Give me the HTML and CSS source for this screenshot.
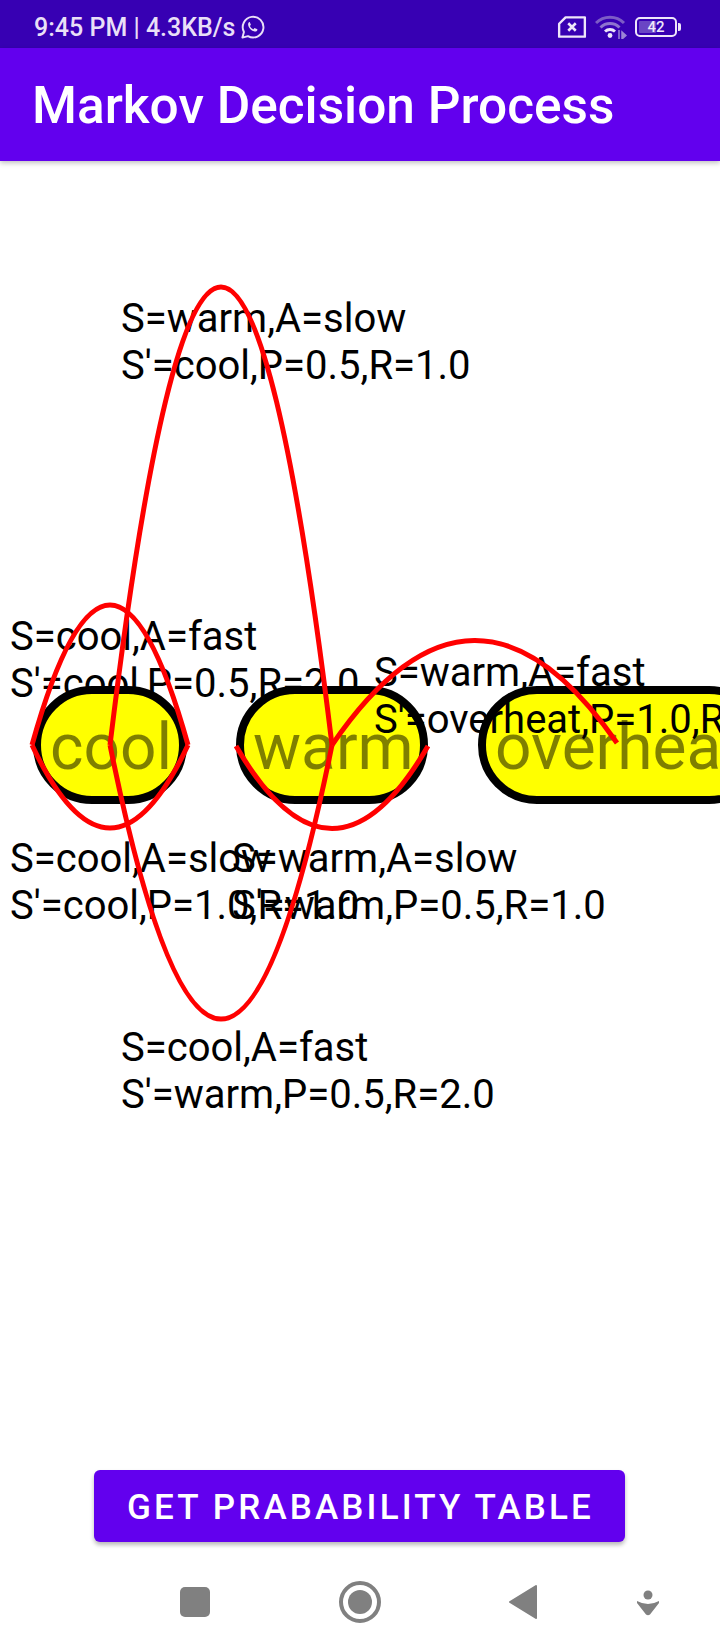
FILE: index.html
```html
<!DOCTYPE html>
<html lang="en">
<head>
  <meta charset="UTF-8" />
  <meta name="viewport" content="width=device-width, initial-scale=1.0"/>
  <title>Markov Decision Process</title>
  <link rel="stylesheet" href="styles.css">
</head>
<body>
  <div class="phone">
    <div class="status-bar">
      <div class="status-left">
        <span>9:45 PM | 4.3KB/s</span>
        <svg class="whatsapp" viewBox="0 0 24 24" width="27" height="27">
          <path d="M3 21l1.4-5A9.2 9.2 0 1 1 8 19.7z" fill="none" stroke="#e9dff7" stroke-width="1.7" stroke-linejoin="round"/>
          <path d="M8.8 7.4c-.9.8-1 2.2-.2 3.9 1 2 2.700 3.500 4.700 4.100 1.400.4 2.600 0 3-1 .2-.5 0-.8-.4-1l-1.700-.8c-.4-.2-.6 0-.9.4-.4.5-.6.6-1.100.3-1-.5-1.800-1.300-2.300-2.300-.2-.4 0-.6.3-.9.3-.3.4-.5.2-.9l-.7-1.700c-.2-.5-.5-.5-.9-.1z" fill="#e9dff7"/>
        </svg>
      </div>
      <div class="status-right">
        <svg viewBox="0 0 28 22" width="30" height="24">
          <path d="M8 2h18v18H2V8z" fill="none" stroke="#eee6fa" stroke-width="2.2" stroke-linejoin="round"/>
          <path d="M10.500 7.500l7 7M17.500 7.500l-7 7" stroke="#eee6fa" stroke-width="2.400"/>
        </svg>
        <svg viewBox="0 0 32 24" width="32" height="24">
          <path d="M1 8a20 20 0 0 1 28 0" fill="none" stroke="#7d5cc6" stroke-width="3"/>
          <path d="M5.500 12.500a13.500 13.500 0 0 1 19 0" fill="none" stroke="#8f74cf" stroke-width="3"/>
          <path d="M10 16.500a7.500 7.500 0 0 1 10 0" fill="none" stroke="#eee6fa" stroke-width="3"/>
          <circle cx="15" cy="20.500" r="2.400" fill="#eee6fa"/>
          <path d="M24 15v9M27 17v7l4-3.500z" stroke="#9c84d6" stroke-width="1.500" fill="#9c84d6"/>
        </svg>
        <div class="battery">
          <div class="battery-body">
            <div class="battery-fill"></div>
            <span class="battery-num">42</span>
          </div>
          <div class="battery-cap"></div>
        </div>
      </div>
    </div>

    <div class="app-bar">Markov Decision Process</div>

    <div class="canvas">
      <div class="edge-label label-warm-cool">S=warm,A=slow<br>S'=cool,P=0.5,R=1.0</div>
      <div class="edge-label label-cool-top">S=cool,A=fast<br>S'=cool,P=0.5,R=2.0</div>
      <div class="edge-label label-cool-bottom">S=cool,A=slow<br>S'=cool,P=1.0,R=1.0</div>
      <div class="edge-label label-warm-bottom">S=warm,A=slow<br>S'=warm,P=0.5,R=1.0</div>
      <div class="edge-label label-cool-warm">S=cool,A=fast<br>S'=warm,P=0.5,R=2.0</div>

      <div class="node node-cool"><span>cool</span></div>
      <div class="node node-warm"><span>warm</span></div>
      <div class="node node-overheat"><span>overheat</span></div>

      <div class="edge-label label-overheat">S=warm,A=fast<br>S'=overheat,P=1.0,R=-10</div>

      <svg class="edges" viewBox="0 161 720 1289" width="720" height="1289">
        <path d="M32 745Q110 465 188 745"/>
        <path d="M32 745Q110 911 188 745"/>
        <path d="M236 746Q332 911 428 746"/>
        <path d="M110 745Q221 -171 332 745"/>
        <path d="M110 745Q221 1293 332 745"/>
        <path d="M332 745Q474 537 617 743"/>
      </svg>
    </div>

    <div class="footer">
      <button class="table-btn">GET PRABABILITY TABLE</button>
    </div>

    <div class="nav-bar">
      <div class="nav-square"></div>
      <div class="nav-circle"><div class="nav-dot"></div></div>
      <svg class="nav-back" viewBox="0 0 30 36" width="30" height="36">
        <path d="M28 2L2 18l26 16z" fill="#808080" stroke="#808080" stroke-width="2" stroke-linejoin="round"/>
      </svg>
      <svg class="nav-down" viewBox="0 0 24 26" width="24" height="26">
        <circle cx="12" cy="5" r="4.500" fill="#808080"/>
        <path d="M1 11q11 6 22 0v2l-9 11.500q-2 1.500-4 0L1 13z" fill="#808080"/>
      </svg>
    </div>
  </div>
</body>
</html>
```

FILE: styles.css
```css
* {
  box-sizing: border-box;
}

body {
  margin: 0;
  background: #fff;
  font-family: Roboto, sans-serif;
}

.phone {
  width: 720px;
  height: 1650px;
  display: flex;
  flex-direction: column;
  overflow: hidden;
}

/* status bar */
.status-bar {
  height: 48px;
  flex: none;
  background: #3700b3;
  color: #e9dff7;
  display: flex;
  align-items: center;
  justify-content: space-between;
  padding: 6px 39px 0 34px;
}

.status-left {
  display: flex;
  align-items: center;
  gap: 4px;
  font-size: 25px;
  font-weight: 500;
}

.status-right {
  display: flex;
  align-items: center;
  gap: 8px;
}

.battery {
  display: flex;
  align-items: center;
  gap: 1px;
}

.battery-body {
  position: relative;
  width: 42px;
  height: 20px;
  border: 2px solid #eee6fa;
  border-radius: 5px;
  padding: 2px;
}

.battery-fill {
  width: 50%;
  height: 100%;
  background: #6a45c4;
  border-radius: 1px;
}

.battery-num {
  position: absolute;
  top: 0;
  left: 0;
  right: 0;
  bottom: 0;
  text-align: center;
  font-size: 15px;
  line-height: 16px;
  font-weight: 500;
  color: #eee6fa;
}

.battery-cap {
  width: 3px;
  height: 8px;
  background: #eee6fa;
  border-radius: 0 2px 2px 0;
}

/* app bar */
.app-bar {
  height: 113px;
  flex: none;
  background: #6200ee;
  color: #fff;
  font-size: 51.400px;
  font-weight: 500;
  line-height: 116px;
  padding-left: 32px;
  box-shadow: 0 2px 5px rgba(0, 0, 0, 0.25);
  position: relative;
  z-index: 1;
}

/* graph canvas, everything in here is placed by coordinate */
.canvas {
  height: 1289px;
  flex: none;
  position: relative;
  overflow: hidden;
}

.edge-label {
  position: absolute;
  white-space: nowrap;
  font-size: 40px;
  line-height: 47px;
  color: #000;
}

.label-warm-cool { left: 121px; top: 134px; }
.label-cool-top { left: 10px; top: 452px; }
.label-cool-bottom { left: 10px; top: 674px; }
.label-warm-bottom { left: 232px; top: 674px; }
.label-cool-warm { left: 121px; top: 863px; }
.label-overheat { left: 374px; top: 488px; }

.node {
  position: absolute;
  top: 525px;
  height: 118px;
  background: #ff0;
  border: 8px solid #000;
  border-radius: 59px;
  color: rgba(0, 0, 0, 0.5);
  font-size: 64px;
  line-height: 108px;
  padding: 0 9px;
  white-space: nowrap;
}

.node-cool { left: 33px; width: 154px; }
.node-warm { left: 236px; width: 192px; }
.node-overheat { left: 478px; width: 290px; }

.edges {
  position: absolute;
  top: 0;
  left: 0;
}

.edges path {
  fill: none;
  stroke: #f00;
  stroke-width: 5;
}

/* bottom button */
.footer {
  height: 112px;
  flex: none;
  padding-top: 20px;
  display: flex;
  justify-content: center;
}

.table-btn {
  width: 531px;
  height: 72px;
  margin-left: -1px;
  padding: 2px 0 0 2px;
  background: #6200ee;
  color: #fff;
  border: none;
  border-radius: 6px;
  font-family: Roboto, sans-serif;
  font-size: 35px;
  font-weight: 500;
  letter-spacing: 3.150px;
  box-shadow: 0 3px 4px rgba(0, 0, 0, 0.28);
}

/* android nav buttons */
.nav-bar {
  flex: 1;
  position: relative;
}

.nav-square {
  position: absolute;
  left: 180px;
  top: 25px;
  width: 30px;
  height: 30px;
  background: #808080;
  border-radius: 5px;
}

.nav-circle {
  position: absolute;
  left: 339px;
  top: 19px;
  width: 42px;
  height: 42px;
  border: 4px solid #808080;
  border-radius: 50%;
  display: flex;
  align-items: center;
  justify-content: center;
}

.nav-dot {
  width: 24px;
  height: 24px;
  background: #808080;
  border-radius: 50%;
}

.nav-back {
  position: absolute;
  left: 508px;
  top: 22px;
}

.nav-down {
  position: absolute;
  left: 636px;
  top: 28px;
}
```
